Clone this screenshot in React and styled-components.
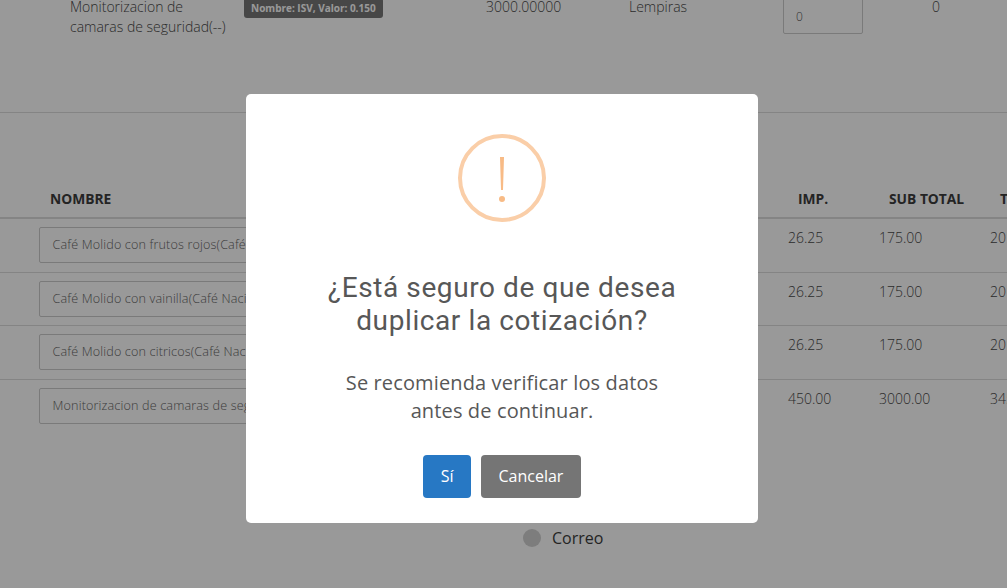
import styled, { createGlobalStyle } from 'styled-components';

const GlobalStyle = createGlobalStyle`
  html, body {
    margin: 0;
    height: 100%;
    overflow: hidden;
    background: #fff;
  }
  body {
    font-family: "Open Sans", "Noto Sans", sans-serif;
    color: #3c3c3c;
  }
`;

const Page = styled.div`
  width: 1007px;
  height: 588px;
  overflow: hidden;
`;

const ProductRow = styled.div`
  display: grid;
  grid-template-columns: 244px 242px 143px 154px 149px 1fr;
  height: 116px;
  margin-top: -3px;
  border-bottom: 1px solid #ddd;
  color: #484848;
  font-size: 14px;
  font-weight: 300;
  line-height: 20px;
  box-sizing: border-box;
`;

const ProductName = styled.div`
  padding-left: 70px;
  width: 160px;
`;

const Tag = styled.div`
  align-self: start;
  justify-self: start;
  height: 20px;
  margin-top: 1px;
  padding: 0 7px;
  background: #777;
  border-radius: 3px;
  color: #fff;
  font-size: 10px;
  font-weight: 700;
  line-height: 20px;
  white-space: nowrap;
`;

const QtyBox = styled.div`
  width: 80px;
  height: 37px;
  box-sizing: border-box;
  padding: 9px 0 0 12px;
  border: 1px solid #ccc;
  border-radius: 2px;
  font-size: 12px;
  line-height: 20px;
  color: #555;
`;

const Table = styled.div`
  margin-top: 71px;
`;

const Columns = styled.div`
  display: grid;
  grid-template-columns: 749px 91px 111px 1fr;
`;

const HeadRow = styled(Columns)`
  height: 33px;
  border-bottom: 2px solid #ddd;
  font-size: 13.8px;
  font-weight: 700;
  line-height: 30px;
  white-space: nowrap;
`;

const HeadCell = styled.div`
  padding-left: ${p => p.$indent}px;
`;

const Row = styled(Columns)`
  height: ${p => p.$height}px;
  box-sizing: border-box;
  border-bottom: ${p => (p.$last ? '0' : '1px solid #ddd')};
  color: #484848;
  font-size: 14px;
  font-weight: 300;
`;

const NameCell = styled.div`
  padding: 8px 0 0 39px;
`;

const NameBox = styled.div`
  width: 300px;
  height: 35.5px;
  box-sizing: border-box;
  padding: 0 12.5px;
  border: 1px solid #ccc;
  border-radius: 2px;
  font-size: 12.6px;
  font-weight: 300;
  letter-spacing: 0.15px;
  line-height: 34px;
  color: #666;
  white-space: nowrap;
  overflow: hidden;
`;

const ValueCell = styled.div`
  padding: 9px 0 0 ${p => p.$indent}px;
  line-height: 20px;
  white-space: nowrap;
`;

const Contact = styled.label`
  display: flex;
  align-items: center;
  gap: 11px;
  margin: 93px 0 0 523px;
  font-size: 16px;
  line-height: 22px;
`;

const RadioDot = styled.span`
  width: 18px;
  height: 18px;
  border-radius: 50%;
  background: #d0d0d0;
`;

const Overlay = styled.div`
  position: fixed;
  inset: 0;
  background: rgba(0, 0, 0, 0.4);
`;

const Modal = styled.div`
  position: absolute;
  left: 246px;
  top: 94px;
  width: 512px;
  height: 429px;
  box-sizing: border-box;
  padding-top: 40px;
  background: #fff;
  border-radius: 5px;
  display: flex;
  flex-direction: column;
  align-items: center;
  text-align: center;
`;

const WarningIcon = styled.div`
  position: relative;
  width: 88px;
  height: 88px;
  box-sizing: border-box;
  border: 4px solid #facea8;
  border-radius: 50%;
`;

const WarningBar = styled.span`
  position: absolute;
  left: 38px;
  top: 19px;
  width: 4px;
  height: 33px;
  background: #f8bb86;
  clip-path: polygon(0 0, 100% 0, 75% 100%, 25% 100%);
`;

const WarningDot = styled.span`
  position: absolute;
  left: 37px;
  top: 58px;
  width: 6px;
  height: 6px;
  border-radius: 50%;
  background: #f8bb86;
`;

const Title = styled.h2`
  margin: 49px 0 0;
  font-family: Roboto, "Noto Sans", sans-serif;
  font-size: 28px;
  font-weight: 400;
  line-height: 33px;
  letter-spacing: 0.6px;
  color: #575757;
`;

const Message = styled.p`
  margin: 32px 0 0;
  font-size: 20px;
  line-height: 28px;
  letter-spacing: 0.13px;
  color: #575757;
`;

const Actions = styled.div`
  display: flex;
  gap: 10px;
  margin-top: 30px;
`;

const Button = styled.button`
  height: 43px;
  padding: 0 17.5px 2px;
  border: 0;
  border-radius: 4px;
  background: ${p => p.$bg};
  color: #fff;
  font-family: inherit;
  font-size: 16px;
`;

const items = [
  { name: 'Café Molido con frutos rojos(Café Nacional)', imp: '26.25', sub: '175.00', total: '201.25', height: 54 },
  { name: 'Café Molido con vainilla(Café Nacional)', imp: '26.25', sub: '175.00', total: '201.25', height: 53 },
  { name: 'Café Molido con citricos(Café Nacional)', imp: '26.25', sub: '175.00', total: '201.25', height: 54 },
  { name: 'Monitorizacion de camaras de seguridad(--)', imp: '450.00', sub: '3000.00', total: '3450.00', height: 54, last: true },
];

export default function App() {
  return (
    <>
      <GlobalStyle />
      <Page>
        <ProductRow>
          <ProductName>Monitorizacion de camaras de seguridad(--)</ProductName>
          <Tag>Nombre: ISV, Valor: 0.150</Tag>
          <div>3000.00000</div>
          <div>Lempiras</div>
          <QtyBox>0</QtyBox>
          <div>0</div>
        </ProductRow>
        <Table>
          <HeadRow>
            <HeadCell $indent={50}>NOMBRE</HeadCell>
            <HeadCell $indent={49}>IMP.</HeadCell>
            <HeadCell $indent={49}>SUB TOTAL</HeadCell>
            <HeadCell $indent={49}>TOTAL</HeadCell>
          </HeadRow>
          {items.map(item => (
            <Row key={item.name} $height={item.height} $last={item.last}>
              <NameCell><NameBox>{item.name}</NameBox></NameCell>
              <ValueCell $indent={39}>{item.imp}</ValueCell>
              <ValueCell $indent={39}>{item.sub}</ValueCell>
              <ValueCell $indent={39}>{item.total}</ValueCell>
            </Row>
          ))}
        </Table>
        <Contact><RadioDot />Correo</Contact>
      </Page>
      <Overlay>
        <Modal>
          <WarningIcon>
            <WarningBar />
            <WarningDot />
          </WarningIcon>
          <Title>¿Está seguro de que desea<br />duplicar la cotización?</Title>
          <Message>Se recomienda verificar los datos<br />antes de continuar.</Message>
          <Actions>
            <Button $bg="#2778c4">Sí</Button>
            <Button $bg="#757575">Cancelar</Button>
          </Actions>
        </Modal>
      </Overlay>
    </>
  );
}
